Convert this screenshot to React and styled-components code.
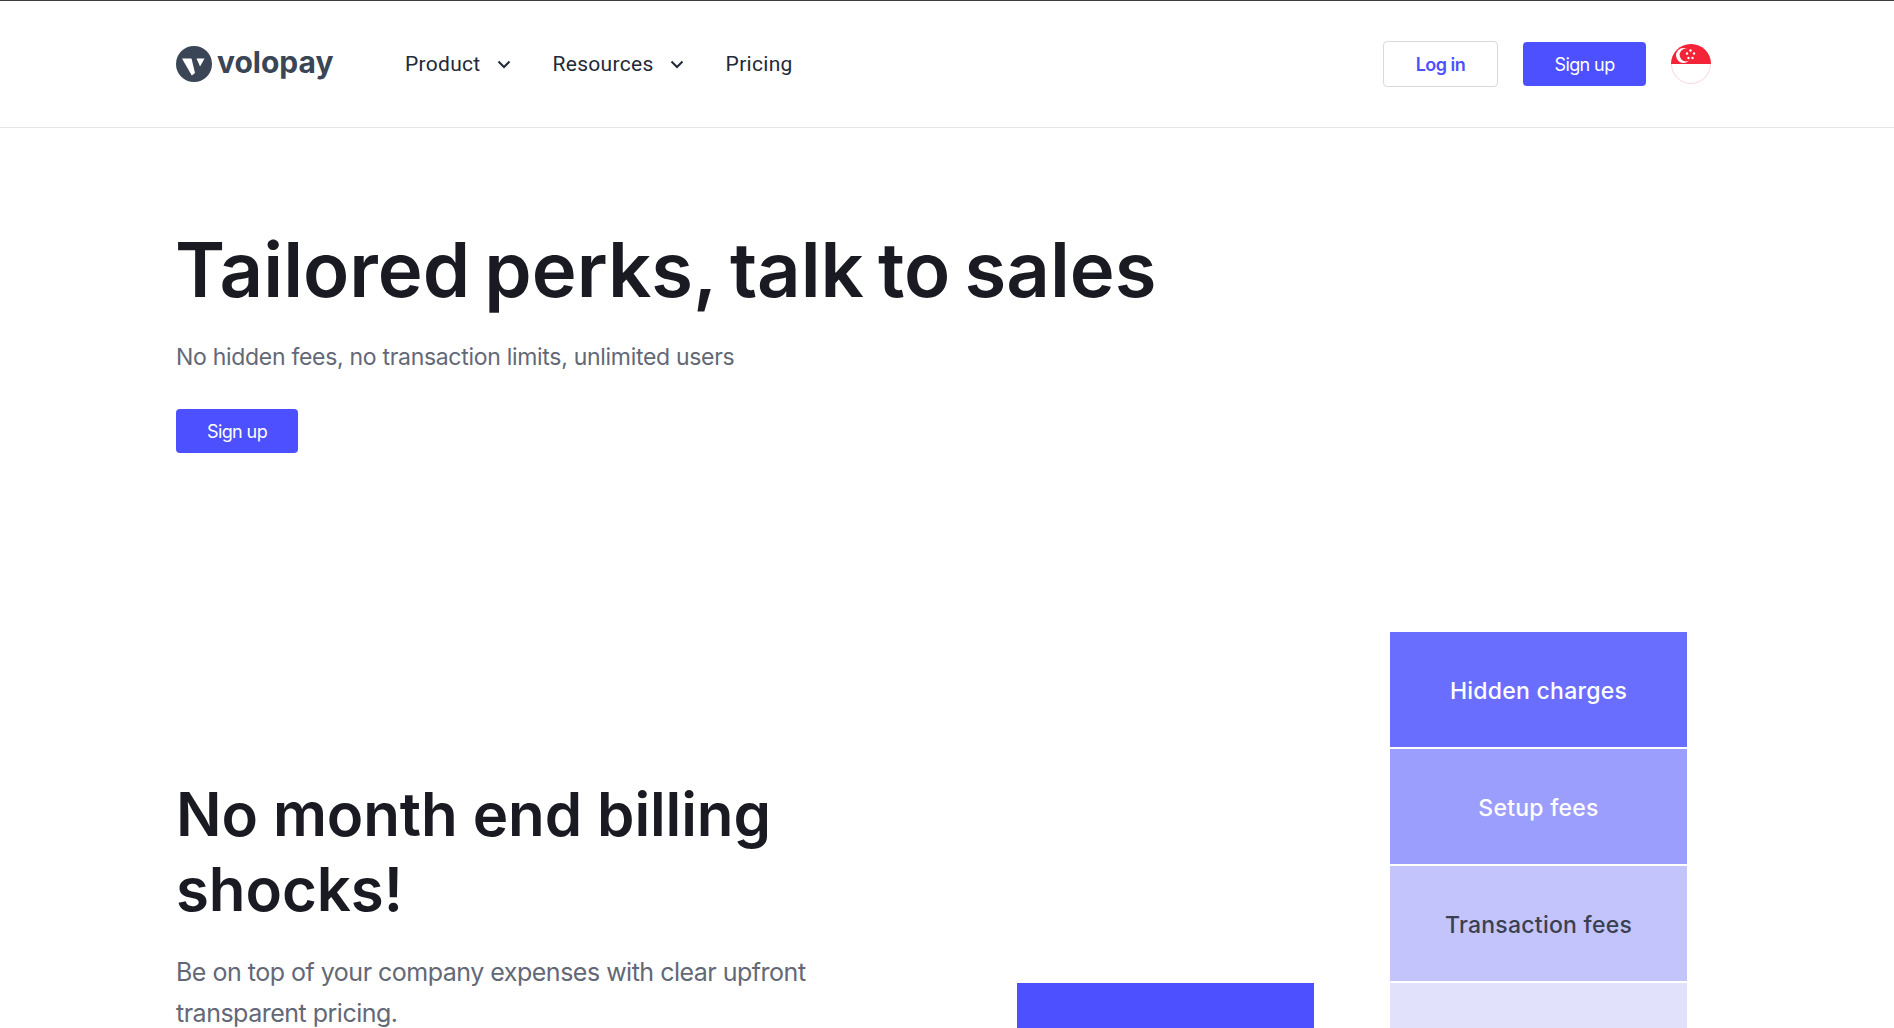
import React from "react";
import styled, { createGlobalStyle } from "styled-components";

const Global = createGlobalStyle`
  html, body { margin: 0; padding: 0; background: #fff; height: 100%; overflow: hidden; }
  #root { height: 1028px; overflow: hidden; }
  * { box-sizing: border-box; }
  body { font-family: "Inter", "Liberation Sans", sans-serif; }
`;

const Page = styled.div`
  width: 1894px;
  height: 1028px;
  overflow: hidden;
  border-top: 1px solid #3c3c3c;
`;

const Header = styled.header`
  height: 127px;
  padding: 0 183px 0 176px;
  border-bottom: 1px solid #e8e8e8;
  display: flex;
  align-items: center;
`;

const Logo = styled.div`
  display: flex;
  align-items: center;
  gap: 5px;
  width: 229px;
  color: #3a4556;
`;

const LogoText = styled.span`
  font-family: "Inter", sans-serif;
  font-size: 30px;
  font-weight: 700;
  letter-spacing: 0;
  position: relative;
  top: -2px;
`;

const Nav = styled.nav`
  display: flex;
  align-items: center;
  flex: 1;
`;

const NavItem = styled.a`
  display: flex;
  align-items: center;
  gap: 16px;
  margin-right: ${(p) => p.$gap}px;
  font-family: "Roboto", sans-serif;
  font-size: 21px;
  letter-spacing: 0.3px;
  color: #222938;
`;

const Actions = styled.div`
  display: flex;
  align-items: center;
`;

const Button = styled.button`
  height: 44px;
  width: ${(p) => p.$w}px;
  border: 0;
  border-radius: 4px;
  background: #4c50ff;
  color: #fff;
  font-family: "Inter", sans-serif;
  font-size: 18px;
  font-weight: 400;
  letter-spacing: -0.6px;
  padding: 0;
`;

const OutlineButton = styled(Button)`
  height: 46px;
  background: #fff;
  border: 1px solid #d9d9d9;
  color: #4c50ff;
  font-weight: 600;
  letter-spacing: -0.5px;
  margin-right: 25px;
`;

const FlagWrap = styled.div`
  margin-left: 25px;
  width: 40px;
  height: 40px;
`;

const Hero = styled.section`
  padding: 98px 176px 0;
`;

const H1 = styled.h1`
  margin: 0 0 0 -1px;
  font-family: "Inter", sans-serif;
  font-size: 76px;
  line-height: 86px;
  font-weight: 600;
  letter-spacing: 0;
  word-spacing: -5px;
  color: #1a1b22;
`;

const Sub = styled.p`
  margin: 29px 0 0;
  font-size: 23px;
  line-height: 32px;
  letter-spacing: -0.3px;
  color: #636876;
`;

const HeroButton = styled(Button)`
  display: block;
  margin-top: 36px;
`;

const Feature = styled.section`
  display: flex;
  justify-content: space-between;
  padding: 179px 207px 0 176px;
`;

const Copy = styled.div`
  width: 680px;
  padding-top: 145px;
`;

const H2 = styled.h2`
  margin: 0;
  font-family: "Inter", sans-serif;
  font-size: 60px;
  line-height: 75px;
  font-weight: 600;
  letter-spacing: -0.1px;
  color: #1a1b22;
`;

const Lead = styled.p`
  margin: 25px 0 0;
  font-size: 25px;
  line-height: 41px;
  letter-spacing: -0.5px;
  color: #636876;
`;

const Chart = styled.div`
  display: flex;
  align-items: flex-start;
  gap: 76px;
`;

const Column = styled.div`
  width: 297px;
  display: flex;
  flex-direction: column;
  gap: 2px;
  padding-top: ${(p) => p.$offset || 0}px;
`;

const Block = styled.div`
  height: 115px;
  padding-top: 2px;
  display: flex;
  align-items: center;
  justify-content: center;
  background: ${(p) => p.$bg};
  color: ${(p) => p.$fg || "#fff"};
  font-size: 23px;
  font-weight: 500;
  letter-spacing: 0.25px;
`;

const Chevron = () => (
  <svg width="14" height="9" viewBox="0 0 14 9" fill="none">
    <path d="M1.5 1.5 7 7l5.5-5.5" stroke="#222938" strokeWidth="2" />
  </svg>
);

const LogoMark = () => (
  <svg width="36" height="36" viewBox="0 0 36 36">
    <circle cx="18" cy="18" r="18" fill="#3a4556" />
    <path d="M6 12.5h9.5L19 27l-3.2 2.6z" fill="#fff" />
    <path d="M20.5 12.5h8L24 20.5z" fill="#fff" />
  </svg>
);

const Flag = () => (
  <svg width="40" height="40" viewBox="0 0 40 40">
    <circle cx="20" cy="20" r="19.5" fill="#fff" stroke="#fbd5da" />
    <path d="M0 20a20 20 0 0 1 40 0z" fill="#f32338" />
    <circle cx="12.5" cy="11.5" r="7.5" fill="#fff" />
    <circle cx="15" cy="11" r="6.4" fill="#f32338" />
    <g fill="#fff">
      <circle cx="19.5" cy="6.5" r="1.2" />
      <circle cx="16" cy="9.5" r="1.2" />
      <circle cx="23" cy="9.5" r="1.2" />
      <circle cx="17.5" cy="14" r="1.2" />
      <circle cx="21.5" cy="14" r="1.2" />
    </g>
  </svg>
);

export default function App() {
  return (
    <Page>
      <Global />
      <Header>
        <Logo>
          <LogoMark />
          <LogoText>volopay</LogoText>
        </Logo>
        <Nav>
          <NavItem $gap={42}>
            Product <Chevron />
          </NavItem>
          <NavItem $gap={42}>
            Resources <Chevron />
          </NavItem>
          <NavItem>Pricing</NavItem>
        </Nav>
        <Actions>
          <OutlineButton $w={115}>Log in</OutlineButton>
          <Button $w={123}>Sign up</Button>
          <FlagWrap>
            <Flag />
          </FlagWrap>
        </Actions>
      </Header>
      <Hero>
        <H1>Tailored perks, talk to sales</H1>
        <Sub>No hidden fees, no transaction limits, unlimited users</Sub>
        <HeroButton $w={122}>Sign up</HeroButton>
      </Hero>
      <Feature>
        <Copy>
          <H2>
            No month end billing
            <br />
            shocks!
          </H2>
          <Lead>
            Be on top of your company expenses with clear upfront transparent pricing.
          </Lead>
        </Copy>
        <Chart>
          <Column $offset={351}>
            <Block $bg="#4c50ff" />
          </Column>
          <Column>
            <Block $bg="#6a6eff">Hidden charges</Block>
            <Block $bg="#9b9efd">Setup fees</Block>
            <Block $bg="#c4c4fc" $fg="#3a4050">
              Transaction fees
            </Block>
            <Block $bg="#e1e1fc" />
          </Column>
        </Chart>
      </Feature>
    </Page>
  );
}
